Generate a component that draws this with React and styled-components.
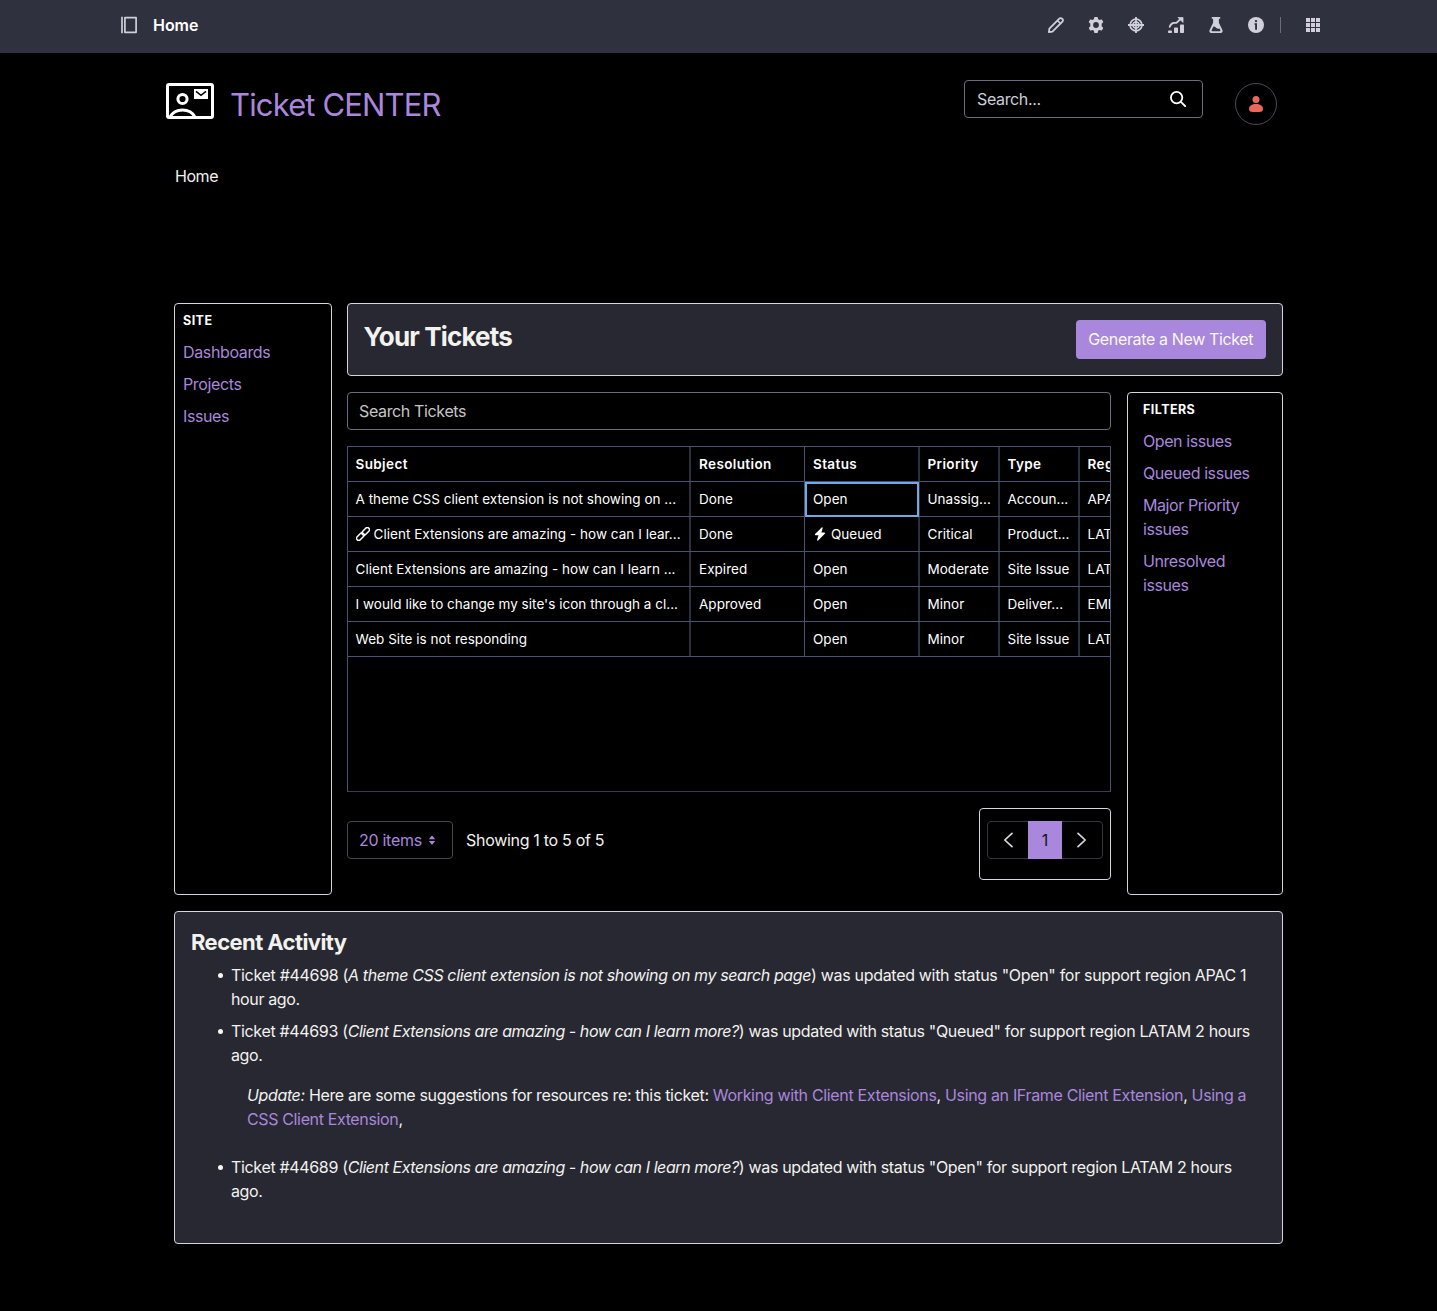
import React from 'react';
import styled, { createGlobalStyle } from 'styled-components';

const Global = createGlobalStyle`
  *, *::before, *::after { box-sizing: border-box; }
  html, body { margin: 0; background: #000; }
  body { font-family: Inter, "Liberation Sans", sans-serif; font-size: 16px; line-height: 24px; color: #f2f2ee; overflow: hidden; }
`;

const Page = styled.div`
  width: 1437px;
  height: 1311px;
  background: #000;
`;

const Text = styled.span`
  display: block;
  white-space: nowrap;
  letter-spacing: ${(p) => p.$ls ?? -0.36}px;

  em { letter-spacing: ${(p) => p.$em ?? -0.36}px; }
`;

const ControlBar = styled.header`
  height: 53px;
  padding: 0 116px 3px 120px;
  background: #30313f;
  display: flex;
  align-items: center;
  justify-content: space-between;
  color: #d0d0dc;
`;

const BarGroup = styled.div`
  display: flex;
  align-items: center;
  gap: ${(p) => p.$gap}px;
`;

const BarTitle = styled(Text)`
  font-weight: 600;
  color: #fff;
`;

const BarDivider = styled.div`
  width: 1px;
  height: 16px;
  background: #6b6c7e;
  margin-left: -8px;
`;

const Icon = styled.svg`
  display: block;
  flex: none;
  width: ${(p) => p.$size ?? 16}px;
  height: ${(p) => p.$size ?? 16}px;
`;

const SiteHeader = styled.div`
  height: 103px;
  padding: 27px 160px 0 166px;
  display: flex;
  align-items: flex-start;
  justify-content: space-between;
`;

const Brand = styled.div`
  display: flex;
  align-items: center;
  gap: 16px;
  padding-top: 3px;
`;

const BrandLogo = styled.svg`
  display: block;
  width: 48px;
  height: 36px;
  margin-top: -8px;
`;

const BrandName = styled(Text)`
  font-size: 31px;
  line-height: 44px;
  font-weight: 400;
  color: #a987dc;
`;

const HeaderTools = styled.div`
  display: flex;
  gap: 32px;
`;

const SearchField = styled.div`
  width: 239px;
  height: 38px;
  padding: 0 16px 0 12px;
  border: 1px solid #6b6c7e;
  border-radius: 4px;
  display: flex;
  align-items: center;
  justify-content: space-between;
  color: #cdced9;
`;

const Avatar = styled.div`
  width: 42px;
  height: 42px;
  margin-top: 3px;
  border: 1px solid #4a4b58;
  border-radius: 50%;
  display: flex;
  align-items: center;
  justify-content: center;
`;

const Breadcrumb = styled.nav`
  height: 147px;
  padding: 8px 175px;
`;

const Content = styled.main`
  width: 1109px;
  margin-left: 174px;
  display: grid;
  grid-template-columns: 157.5px 936.5px;
  grid-template-rows: 592px 333px;
  column-gap: 15px;
  row-gap: 16px;
`;

const Panel = styled.section`
  border: 1px solid #d4d4dc;
  border-radius: 4px;
`;

const SideNav = styled(Panel)`
  padding: ${(p) => p.$pad};
  display: flex;
  flex-direction: column;
  gap: 8px;
`;

const SideHeading = styled(Text)`
  font-size: 12.5px;
  line-height: 16px;
  font-weight: 650;
  color: #fff;
  padding-top: 1px;
  margin-bottom: 3px;
`;

const SideLink = styled(Text)`
  color: #a987dc;
`;

const Desk = styled.div`
  display: grid;
  grid-template-rows: 73px 503px;
  gap: 16px;
`;

const TitlePanel = styled(Panel)`
  background: #282832;
  padding: 16px;
  display: flex;
  justify-content: space-between;
`;

const PageTitle = styled(Text)`
  font-size: 26px;
  line-height: 33px;
  font-weight: 650;
`;

const PrimaryButton = styled.button`
  width: 190.5px;
  height: 38.5px;
  padding: 0 0 1px;
  border: 0;
  border-radius: 4px;
  background: #a987dc;
  color: #f8f8f2;
  font: inherit;
  display: flex;
  align-items: center;
  justify-content: center;
`;

const Columns = styled.div`
  display: grid;
  grid-template-columns: 764.5px 156px;
  gap: 16px;
`;

const Tickets = styled.div`
  display: flex;
  flex-direction: column;
`;

const TicketSearch = styled(SearchField)`
  width: auto;
  padding-left: 11.5px;
  color: #c6c6c6;
`;

const Grid = styled.div`
  height: 346px;
  margin: 16px 0 0 0.5px;
  border: 1px solid #4a5273;
  border-bottom-color: #363c55;
  overflow: hidden;
`;

const GridRow = styled.div`
  display: grid;
  grid-template-columns: 343px 114px 115px 80px 80px 80px;
  height: 35px;
  border-bottom: 1px solid #4a5273;
  font-size: 13.5px;
  font-weight: ${(p) => (p.$head ? 600 : 400)};
  color: #fff;
`;

const Cell = styled.div`
  position: relative;
  display: flex;
  align-items: center;
  gap: 4px;
  padding-left: ${(p) => p.$pad ?? 8}px;
  border-right: ${(p) => (p.$sharp ? '1px solid #4a5273' : '2px solid #2c2f40')};
  ${(p) =>
    p.$selected &&
    `&::after {
      content: '';
      position: absolute;
      inset: 0 -1px -1px 0;
      border: 2px solid #6daae6;
    }`}
`;

const GridFooter = styled.div`
  margin-top: 15.5px;
  height: 72px;
  display: flex;
  justify-content: space-between;
`;

const FooterLeft = styled.div`
  display: flex;
  align-items: center;
  height: 38px;
  margin-top: 13px;
  gap: 13px;
`;

const SizePicker = styled.div`
  width: 106.5px;
  height: 38px;
  border: 1px solid #44454f;
  border-radius: 4px;
  padding-left: 11.5px;
  display: flex;
  align-items: center;
  gap: 5px;
  color: #a987dc;
`;

const PagerPanel = styled(Panel)`
  width: 132px;
  height: 72px;
  padding: 12px 7px;
`;

const Pager = styled.div`
  width: 116px;
  height: 38px;
  border: 1px solid #33343c;
  border-radius: 4px;
  display: grid;
  grid-template-columns: 40px 34px 40px;
  grid-template-rows: 36px;
  align-items: center;
  justify-items: center;
  color: #d8d8e2;
`;

const PageNumber = styled.div`
  width: 34px;
  height: 38px;
  margin: -1px 0;
  background: #a987dc;
  color: #14131a;
  display: flex;
  align-items: center;
  justify-content: center;
`;

const Activity = styled(Panel)`
  grid-column: 1 / -1;
  background: #282832;
  padding: 16px;
`;

const ActivityTitle = styled(Text)`
  font-size: 22px;
  line-height: 28px;
  font-weight: 650;
`;

const ActivityList = styled.ul`
  margin: 7px 0 0;
  padding-left: 40px;
  list-style: none;
  display: flex;
  flex-direction: column;
  gap: 8px;
`;

const ActivityItem = styled.li`
  position: relative;

  &::before {
    content: '';
    position: absolute;
    left: -13.5px;
    top: 10px;
    width: 5px;
    height: 5px;
    border-radius: 50%;
    background: #f8f8f2;
  }
`;

const Note = styled.div`
  margin: 16px 0 16px 16px;
`;

const Link = styled.a`
  color: #a987dc;
`;

function LightLine({ d, w = 1.6 }) {
  return <path d={d} fill="none" stroke="currentColor" strokeWidth={w} strokeLinejoin="round" strokeLinecap="round" />;
}

const PanelIcon = () => (
  <Icon viewBox="0 0 18 18" $size={18}>
    <path d="M2 .8v16.400" stroke="currentColor" strokeWidth="1.700" />
    <path d="M4.900 1.700h11.200v14.600H4.900z" fill="none" stroke="currentColor" strokeWidth="1.700" strokeLinejoin="round" />
  </Icon>
);

const PencilIcon = () => (
  <Icon viewBox="0 0 16 16">
    <LightLine w={1.8} d="M.9 15.100l.5-3.500L11.300 1.600a1.900 1.900 0 0 1 2.700 0l.4.4a1.900 1.900 0 0 1 0 2.700L4.400 14.600z" />
    <LightLine w={1.6} d="M10.200 4.200l1.700 1.700" />
  </Icon>
);

const CogIcon = () => (
  <Icon viewBox="0 0 16 16" fill="currentColor">
    <path fillRule="evenodd" d="M6.200.6Q6.300 0 6.900 0h2.200q.6 0 .7.600l.35 1.750q.7.300 1.250.700l1.700-.600q.6-.2.900.300l1.100 1.900q.3.550-.150.950L13.600 6.800q.1.600.1 1.200t-.1 1.200l1.350 1.200q.450.400.150.950l-1.100 1.900q-.3.500-.900.300l-1.700-.600q-.550.400-1.250.700l-.35 1.750q-.1.600-.7.600H6.900q-.6 0-.7-.600l-.35-1.750q-.7-.3-1.250-.7l-1.700.6q-.6.2-.9-.3L.9 11.350q-.3-.550.150-.950L2.400 9.200q-.1-.6-.1-1.200t.1-1.200L1.050 5.600Q.6 5.200.9 4.650L2 2.750q.3-.5.9-.3l1.700.6q.550-.4 1.250-.7zM8 5.100a2.900 2.900 0 1 0 0 5.800 2.900 2.900 0 0 0 0-5.800z" />
  </Icon>
);

const TargetIcon = () => (
  <Icon viewBox="0 0 16 16" fill="none" stroke="currentColor">
    <circle cx="8" cy="8" r="5.900" strokeWidth="1.700" />
    <circle cx="8" cy="8" r="3" strokeWidth="1.500" />
    <path d="M8 0v16M0 8h16" strokeWidth="1.800" />
  </Icon>
);

const ChartIcon = () => (
  <Icon viewBox="0 0 16 16" fill="currentColor">
    <rect x="0" y="13.500" width="4" height="2.500" rx=".8" />
    <rect x="6" y="10.500" width="4" height="5.500" rx=".8" />
    <rect x="12" y="7.500" width="4" height="8.500" rx=".8" />
    <path d="M1.700 9.800C2.500 7.500 4 6 6 5.900h2.400l4.200-3.900" fill="none" stroke="currentColor" strokeWidth="1.800" strokeLinecap="round" strokeLinejoin="round" />
    <path d="M10 .4h5v5z" stroke="currentColor" strokeWidth=".8" strokeLinejoin="round" />
  </Icon>
);

const FlaskIcon = () => (
  <Icon viewBox="0 0 16 16" fill="currentColor">
    <path fillRule="evenodd" d="M4.500 0h7a.9.9 0 0 1 0 1.800h-.6v4l3.500 7.200c.7 1.500-.1 3-1.700 3H3.300c-1.600 0-2.400-1.500-1.700-3l3.500-7.200v-4h-.6a.9.9 0 0 1 0-1.800zM5.300 9.700L3.600 13.300c-.2.500 0 .900.500.900h7.800c.5 0 .7-.4.5-.9l-.9-1.900c-1.600.8-3-.2-3.700-.9-.7-.7-1.600-1.200-2.500-.8z" />
  </Icon>
);

const InfoIcon = () => (
  <Icon viewBox="0 0 16 16">
    <circle cx="8" cy="8" r="8" fill="currentColor" />
    <circle cx="8" cy="4.100" r="1.200" fill="#30313f" />
    <path d="M6.500 6.300h2.500v6.500H7.100V7.800h-.6z" fill="#30313f" />
  </Icon>
);

const AppsIcon = () => (
  <Icon viewBox="0 0 16 16" fill="currentColor">
    {[1, 6, 11].map((y) => [1, 6, 11].map((x) => <rect key={`${x}-${y}`} x={x} y={y} width="4" height="4" />))}
  </Icon>
);

const SearchIcon = () => (
  <Icon viewBox="0 0 16 16" fill="none" stroke="#fff" strokeLinecap="round">
    <circle cx="6.600" cy="6.600" r="5.700" strokeWidth="1.800" />
    <path d="M10.900 10.900l4.300 4.300" strokeWidth="1.900" />
  </Icon>
);

const UserIcon = () => (
  <Icon viewBox="0 0 16 16" fill="#e8695c">
    <circle cx="8" cy="3.500" r="3.500" />
    <path d="M8 8c4 0 7 1.700 7 4.700C15 15 13.600 16 11.500 16h-7C2.400 16 1 15 1 12.700 1 9.700 4 8 8 8z" />
  </Icon>
);

const LinkIcon = () => (
  <Icon viewBox="0 0 16 16" $size={14} fill="none" stroke="currentColor" strokeWidth="1.700">
    <g transform="rotate(-45 8 8)">
      <rect x="-1.400" y="5.500" width="10.200" height="5" rx="2.500" />
      <rect x="7.200" y="5.500" width="10.200" height="5" rx="2.500" />
    </g>
  </Icon>
);

const BoltIcon = () => (
  <Icon viewBox="0 0 16 16" $size={14} fill="currentColor">
    <path d="M9.900.5L2.400 8.100c-.5.500-.2 1.300.5 1.300h3.400L4.700 14.700c-.2.900.7 1.300 1.200.7l7.600-7.700c.5-.6.2-1.300-.5-1.300H9.600l1.500-5.200c.2-.9-.7-1.300-1.200-.7z" />
  </Icon>
);

const CaretsIcon = () => (
  <Icon viewBox="0 0 16 16" $size={10} fill="currentColor">
    <path d="M3 6.600h10L8.900 1.500q-.9-.8-1.800 0zM3 9.600h10L8.900 14.700q-.9.800-1.800 0z" />
  </Icon>
);

const Chevron = ({ d }) => (
  <Icon viewBox="0 0 16 16">
    <LightLine w={1.700} d={d} />
  </Icon>
);

const columns = ['Subject', 'Resolution', 'Status', 'Priority', 'Type', 'Region'];
const rows = [
  ['A theme CSS client extension is not showing on ...', 'Done', 'Open', 'Unassig...', 'Accoun...', 'APAC'],
  ['Client Extensions are amazing - how can I lear...', 'Done', 'Queued', 'Critical', 'Product...', 'LATAM'],
  ['Client Extensions are amazing - how can I learn ...', 'Expired', 'Open', 'Moderate', 'Site Issue', 'LATAM'],
  ["I would like to change my site's icon through a cl...", 'Approved', 'Open', 'Minor', 'Deliver...', 'EMEA'],
  ['Web Site is not responding', '', 'Open', 'Minor', 'Site Issue', 'LATAM'],
];

function TicketCell({ value, column, head, selected }) {
  return (
    <Cell $sharp={column === 1} $selected={selected} $pad={column > 2 || column === 0 ? 7.5 : 8}>
      {value.endsWith('lear...') && <LinkIcon />}
      {value === 'Queued' && <BoltIcon />}
      <Text $ls={head ? 0.38 : 0.03}>{value}</Text>
    </Cell>
  );
}

export default function App() {
  return (
    <Page>
      <Global />
      <ControlBar>
        <BarGroup $gap={15}>
          <PanelIcon />
          <BarTitle $ls={-0.05}>Home</BarTitle>
        </BarGroup>
        <BarGroup $gap={24}>
          <PencilIcon />
          <CogIcon />
          <TargetIcon />
          <ChartIcon />
          <FlaskIcon />
          <InfoIcon />
          <BarDivider />
          <AppsIcon />
        </BarGroup>
      </ControlBar>

      <SiteHeader>
        <Brand>
          <BrandLogo viewBox="0 0 48 36" fill="none" stroke="#fff" strokeWidth="3">
            <rect x="1.500" y="1.500" width="45" height="33" rx="1.500" />
            <circle cx="16.500" cy="16" r="4.600" />
            <path d="M4 34c5-9.500 20-9.500 25 0" />
            <rect x="28" y="6" width="14" height="10" fill="#fff" stroke="none" />
            <path d="M30 8.300l5 4 5-4" stroke="#000" strokeWidth="1.600" />
          </BrandLogo>
          <BrandName $ls={-0.85}>Ticket CENTER</BrandName>
        </Brand>
        <HeaderTools>
          <SearchField>
            <Text>Search...</Text>
            <SearchIcon />
          </SearchField>
          <Avatar>
            <UserIcon />
          </Avatar>
        </HeaderTools>
      </SiteHeader>

      <Breadcrumb>
        <Text $ls={-0.45}>Home</Text>
      </Breadcrumb>

      <Content>
        <SideNav as="nav" $pad="8px">
          <SideHeading $ls={0.45}>SITE</SideHeading>
          <SideLink>Dashboards</SideLink>
          <SideLink>Projects</SideLink>
          <SideLink $ls={-0.42}>Issues</SideLink>
        </SideNav>

        <Desk>
          <TitlePanel>
            <PageTitle $ls={-0.85}>Your Tickets</PageTitle>
            <PrimaryButton>
              <Text>Generate a New Ticket</Text>
            </PrimaryButton>
          </TitlePanel>
          <Columns>
            <Tickets>
              <TicketSearch>
                <Text>Search Tickets</Text>
              </TicketSearch>
              <Grid>
                <GridRow $head>
                  {columns.map((c, i) => (
                    <TicketCell key={c} value={c} column={i} head />
                  ))}
                </GridRow>
                {rows.map((row, r) => (
                  <GridRow key={r}>
                    {row.map((value, i) => (
                      <TicketCell key={i} value={value} column={i} selected={r === 0 && i === 2} />
                    ))}
                  </GridRow>
                ))}
              </Grid>
              <GridFooter>
                <FooterLeft>
                  <SizePicker>
                    <Text $ls={-0.28}>20 items</Text>
                    <CaretsIcon />
                  </SizePicker>
                  <Text $ls={-0.3}>Showing 1 to 5 of 5</Text>
                </FooterLeft>
                <PagerPanel>
                  <Pager>
                    <Chevron d="M12 1.300L4.800 8l7.200 6.700" />
                    <PageNumber>1</PageNumber>
                    <Chevron d="M4 1.300L11.200 8 4 14.700" />
                  </Pager>
                </PagerPanel>
              </GridFooter>
            </Tickets>
            <SideNav as="aside" $pad="8px 15px">
              <SideHeading $ls={0.45}>FILTERS</SideHeading>
              <SideLink $ls={-0.42}>Open issues</SideLink>
              <SideLink $ls={-0.42}>Queued issues</SideLink>
              <SideLink $ls={-0.42}>Major Priority<br />issues</SideLink>
              <SideLink $ls={-0.42}>Unresolved<br />issues</SideLink>
            </SideNav>
          </Columns>
        </Desk>

        <Activity>
          <ActivityTitle $ls={-0.58}>Recent Activity</ActivityTitle>
          <ActivityList>
            <ActivityItem>
              <Text $ls={-0.31} $em={-0.38}>Ticket #44698 (<em>A theme CSS client extension is not showing on my search page</em>) was updated with status "Open" for support region APAC 1</Text>
              <Text>hour ago.</Text>
            </ActivityItem>
            <ActivityItem>
              <Text $ls={-0.335} $em={-0.43}>Ticket #44693 (<em>Client Extensions are amazing - how can I learn more?</em>) was updated with status "Queued" for support region LATAM 2 hours</Text>
              <Text>ago.</Text>
              <Note>
                <Text $ls={-0.335}><em>Update:</em> Here are some suggestions for resources re: this ticket: <Link>Working with Client Extensions</Link>, <Link>Using an IFrame Client Extension</Link>, <Link>Using a</Link></Text>
                <Text><Link>CSS Client Extension</Link>,</Text>
              </Note>
            </ActivityItem>
            <ActivityItem>
              <Text $ls={-0.335} $em={-0.43}>Ticket #44689 (<em>Client Extensions are amazing - how can I learn more?</em>) was updated with status "Open" for support region LATAM 2 hours</Text>
              <Text>ago.</Text>
            </ActivityItem>
          </ActivityList>
        </Activity>
      </Content>
    </Page>
  );
}
